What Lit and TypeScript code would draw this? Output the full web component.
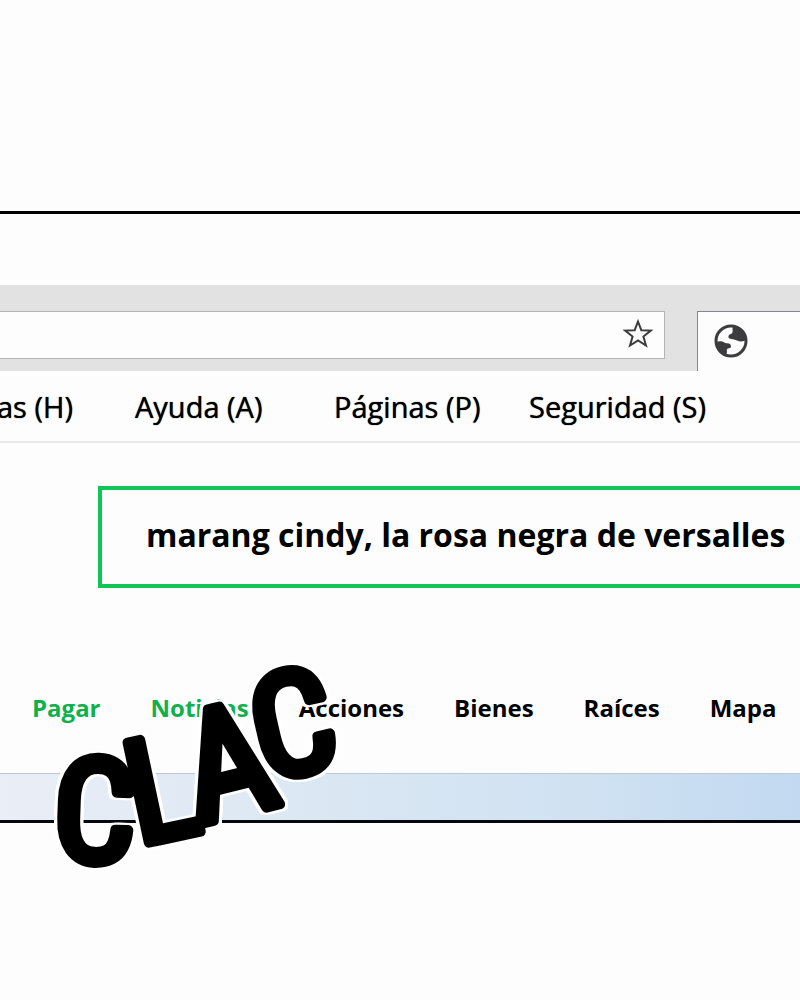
import { LitElement, html, css } from "lit";
import { customElement } from "lit/decorators.js";

@customElement("app-root")
export class AppRoot extends LitElement {
  static styles = css`
    :host {
      display: block;
      position: relative;
      overflow: hidden;
      min-height: 100vh;
      box-sizing: border-box;
      padding-top: 211px;
      background: #fdfdfd;
      color: #000;
      font-family: "Open Sans", "Noto Sans", sans-serif;
    }
    * {
      box-sizing: border-box;
    }
    .window {
      position: relative;
      border-top: 3px solid #000;
      border-bottom: 3px solid #05070c;
      padding-top: 71px;
    }
    .toolbar {
      display: flex;
      align-items: flex-start;
      gap: 32px;
      height: 86px;
      padding-top: 26px;
      background: #e2e2e2;
    }
    .address {
      flex: 1;
      display: flex;
      align-items: center;
      height: 48px;
      padding: 0 10px 2px 0;
      background: #fdfdfd;
      border: 1px solid #b4b4b4;
      border-left: 0;
    }
    .address input {
      flex: 1;
      min-width: 0;
      height: 100%;
      border: 0;
      background: none;
      font: inherit;
      outline: none;
    }
    button {
      display: flex;
      padding: 0;
      border: 0;
      background: none;
      font: inherit;
    }
    .tab {
      width: 103px;
      height: 60px;
      padding: 12px 0 0 16px;
      background: #fdfdfd;
      border-top: 1px solid #84868c;
      border-left: 1px solid #84868c;
    }
    a {
      color: inherit;
      text-decoration: none;
      white-space: nowrap;
    }
    .menu {
      display: grid;
      grid-template-columns: 135px 199px 195px 1fr;
      align-items: center;
      height: 72px;
      border-bottom: 2px solid #e8e8e8;
      font-size: 29px;
      text-shadow: 0 0 1px #000;
    }
    .menu a:first-child {
      margin-left: -3px;
    }
    .search {
      display: block;
      margin: 43px 0 0 98px;
      height: 102px;
      border: 4px solid #11c659;
      border-right: 0;
    }
    .search input {
      width: 100%;
      height: 100%;
      padding: 0 0 6px 44px;
      border: 0;
      background: none;
      color: #000;
      font: inherit;
      font-size: 32px;
      font-weight: 700;
      outline: none;
    }
    .sections {
      display: flex;
      align-items: center;
      gap: 50px;
      height: 185px;
      padding: 54px 0 0 32px;
      font-size: 24px;
      font-weight: 700;
    }
    .paid {
      color: #10b14b;
    }
    .banner {
      height: 47px;
      border-top: 1px solid #bcc8d2;
      background: linear-gradient(90deg, #eaeef6, #dae7f3 42%, #cfe1f2 75%, #c2d9f1);
    }
    .sound {
      position: absolute;
      left: 30px;
      bottom: -69px;
      width: 320px;
      height: 250px;
      overflow: visible;
      pointer-events: none;
      font-family: "Roboto Condensed", "DejaVu Sans Mono", monospace;
      font-weight: 400;
      font-size: 144px;
      stroke: #000;
      stroke-width: 10px;
      stroke-linejoin: round;
      filter: drop-shadow(3px 0 0 #fff) drop-shadow(-3px 0 0 #fff)
        drop-shadow(0 2px 0 #fff) drop-shadow(0 -2px 0 #fff);
    }
    .tall {
      font-size: 154px;
    }
  `;

  render() {
    return html`
      <main class="window">
        <div class="toolbar">
          <div class="address">
            <input type="text" aria-label="Dirección" />
            <button aria-label="Favorito">
              <svg width="32" height="32" viewBox="0 0 32 32" fill="none" stroke="#3c3c3e" stroke-width="2">
                <path d="M16 3.5 19.3 12.2 28.8 12.6 21.4 18.5 24 27.6 16 22.5 8 27.6 10.600 18.500 3.200 12.600 12.700 12.200Z" />
              </svg>
            </button>
          </div>
          <button class="tab" aria-label="Pestaña">
            <svg width="34" height="34" viewBox="0 0 34 34">
              <circle cx="17" cy="17" r="15" fill="none" stroke="#3c3c3e" stroke-width="3" />
              <path fill="#3c3c3e" d="M19 1.500C26 2 32 7 32.500 15C30 18 26 18 23 16.500C20 15 18 15.500 15.500 14.500C14 14 14 11.500 15.500 10.500C18.500 10 19 8 18.500 5Z" />
              <path fill="#3c3c3e" d="M1.500 18C6 16.500 9 17 11 19L15 19.500C17.500 20.500 17.500 23.500 16 24C13 24.500 12.500 25 13 28L12 32C6 30 2 25 1.500 18Z" />
            </svg>
          </button>
        </div>
        <nav class="menu" aria-label="Menú">
          <a href="#h">as (H)</a>
          <a href="#a">Ayuda (A)</a>
          <a href="#p">Páginas (P)</a>
          <a href="#s">Seguridad (S)</a>
        </nav>
        <label class="search">
          <input type="text" aria-label="Buscar" .value=${"marang cindy, la rosa negra de versalles"} />
        </label>
        <nav class="sections" aria-label="Secciones">
          <a class="paid" href="#pagar">Pagar</a>
          <a class="paid" href="#noticias">Noticias</a>
          <a href="#acciones">Acciones</a>
          <a href="#bienes">Bienes</a>
          <a href="#raices">Raíces</a>
          <a href="#mapa">Mapa</a>
        </nav>
        <div class="banner"></div>
        <svg class="sound" viewBox="0 0 320 250">
          <text x="22 108 167 234" y="221 206 186 143" rotate="2 -12 -14 -13">CL<tspan class="tall">A</tspan>C</text>
        </svg>
      </main>
    `;
  }
}
